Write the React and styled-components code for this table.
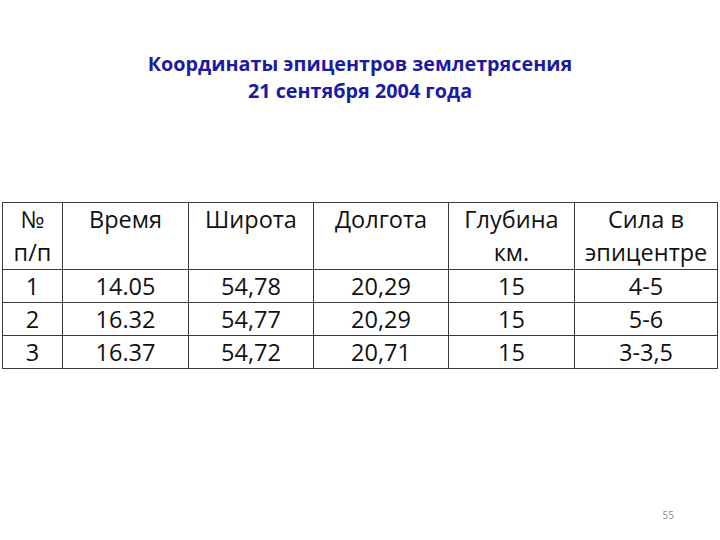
import React from 'react'
import styled, { createGlobalStyle } from 'styled-components'

const GlobalStyle = createGlobalStyle`
  html, body {
    margin: 0;
    padding: 0;
    background: #fff;
  }
`

const columns = [60, 126, 125, 135, 126, 143]

const header = [
  ['№', 'п/п'],
  ['Время'],
  ['Широта'],
  ['Долгота'],
  ['Глубина', 'км.'],
  ['Сила в', 'эпицентре'],
]

const rows = [
  ['1', '14.05', '54,78', '20,29', '15', '4-5'],
  ['2', '16.32', '54,77', '20,29', '15', '5-6'],
  ['3', '16.37', '54,72', '20,71', '15', '3-3,5'],
]

const App = () => {
  return (
    <Slide>
      <GlobalStyle />
      <Title>
        <TitleLine>Координаты эпицентров землетрясения</TitleLine>
        <TitleLine>21 сентября 2004 года</TitleLine>
      </Title>
      <Table>
        <colgroup>
          {columns.map((w, i) => <col key={i} style={{ width: w }} />)}
        </colgroup>
        <thead>
          <tr>
            {header.map((lines, i) => (
              <HeadCell key={i}>
                {lines.map((l, j) => <div key={j}>{l}</div>)}
              </HeadCell>
            ))}
          </tr>
        </thead>
        <tbody>
          {rows.map((r, i) => (
            <tr key={i}>
              {r.map((v, j) => <Cell key={j}>{v}</Cell>)}
            </tr>
          ))}
        </tbody>
      </Table>
      <Footer>
        <PageNumber>55</PageNumber>
      </Footer>
    </Slide>
  )
}

const Slide = styled.div`
  width: 720px;
  height: 540px;
  display: flex;
  flex-direction: column;
  box-sizing: border-box;
  padding-top: 50px;
  font-family: "Open Sans", "Liberation Sans", sans-serif;
  color: #111;
`

const Title = styled.div`
  display: flex;
  flex-direction: column;
  align-items: center;
  font-weight: bold;
  font-size: 19.8px;
  line-height: 27px;
  color: #1b1ba2;
`

const TitleLine = styled.div``

const Table = styled.table`
  margin: 98px 0 0 2px;
  width: 715px;
  border-collapse: collapse;
  table-layout: fixed;
`

const HeadCell = styled.th`
  border: 1px solid #3a3a3a;
  font-weight: normal;
  font-size: 23.5px;
  line-height: 33px;
  height: 66px;
  padding: 0;
  vertical-align: top;
  text-align: center;
`

const Cell = styled.td`
  border: 1px solid #3a3a3a;
  font-size: 23.5px;
  line-height: 32px;
  height: 32px;
  padding: 0;
  text-align: center;
`

const Footer = styled.div`
  margin-top: auto;
  display: flex;
  justify-content: flex-end;
  padding: 0 46px 18px 0;
`

const PageNumber = styled.span`
  font-size: 10px;
  color: #8a8a8a;
`

export default App
